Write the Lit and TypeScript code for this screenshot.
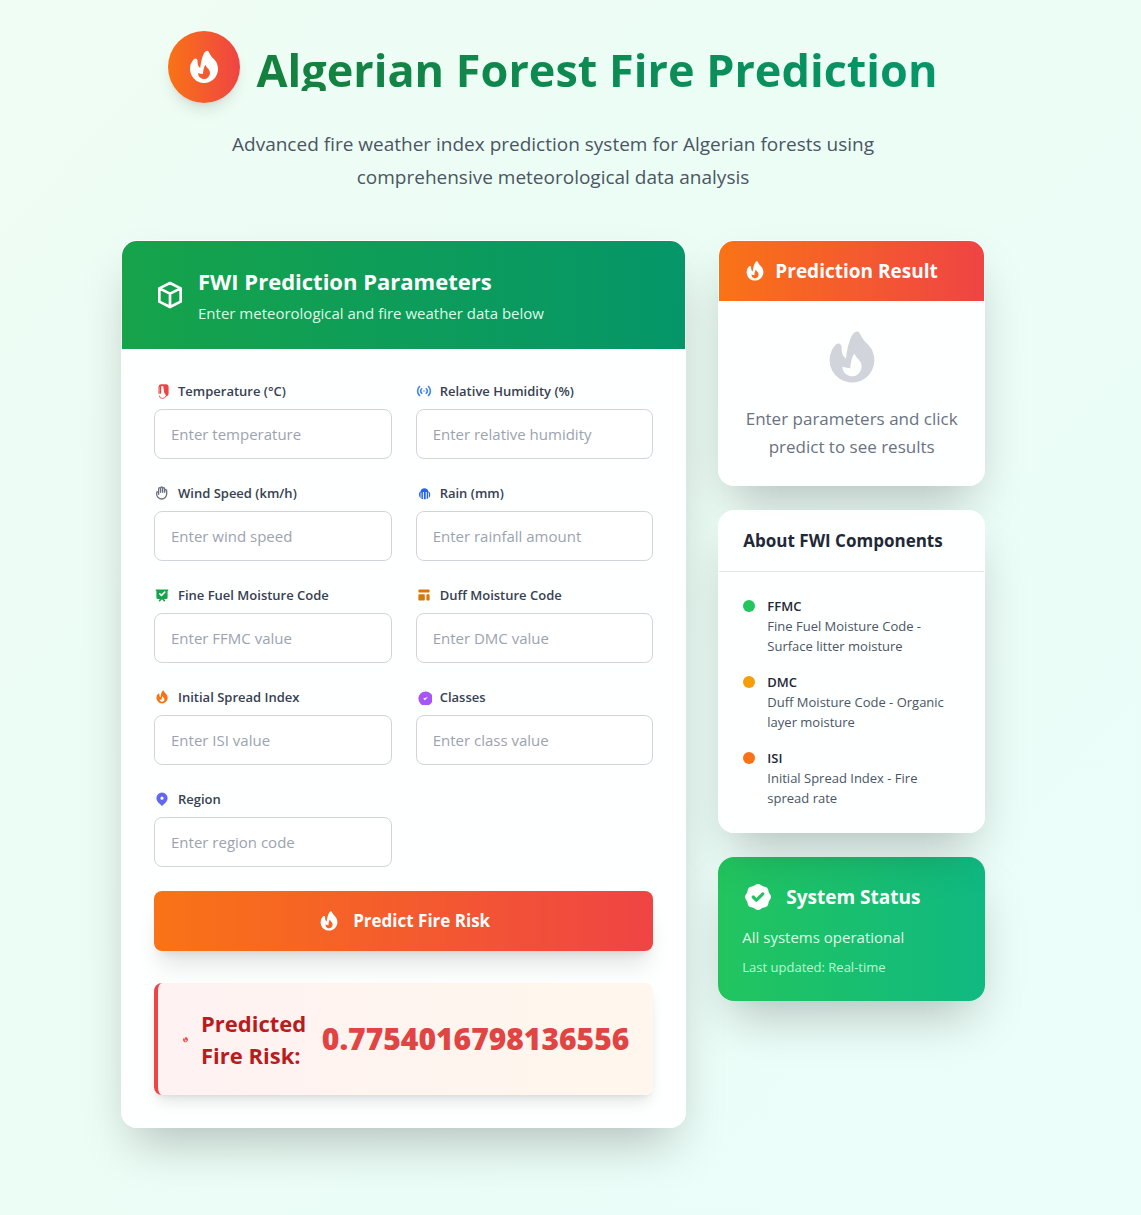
import { LitElement, html, svg, css, nothing } from "lit";
import { customElement, property } from "lit/decorators.js";

const FLAME = svg`<path fill-rule="evenodd" clip-rule="evenodd" d="M12.395 2.553a1 1 0 00-1.45-.385c-.345.23-.614.558-.822.88-.214.33-.403.713-.57 1.116-.334.804-.614 1.768-.84 2.734a31.365 31.365 0 00-.613 3.58 2.64 2.64 0 01-.945-1.067c-.328-.68-.398-1.534-.398-2.654A1 1 0 005.05 6.05 6.981 6.981 0 003 11a7 7 0 1011.95-4.95c-.592-.591-.98-.985-1.348-1.467-.363-.476-.724-1.063-1.207-2.03zM12.12 15.12A3 3 0 017 13s.879.5 2.5.5c0-1 .5-4 1.25-4.5.5 1 .786 1.293 1.371 1.879A2.99 2.99 0 0113 13a2.99 2.99 0 01-.879 2.121z"/>`;

const ICONS: Record<string, { box: number; stroke?: boolean; body: unknown }> = {
  fire: { box: 20, body: FLAME },
  cube: {
    box: 24,
    stroke: true,
    body: svg`<path d="M20 7l-8-4-8 4m16 0l-8 4m8-4v10l-8 4m0-10L4 7m8 4v10M4 7v10l8 4"/>`,
  },
  badge: {
    box: 20,
    body: svg`<path fill-rule="evenodd" d="M6.267 3.455a3.066 3.066 0 001.745-.723 3.066 3.066 0 013.976 0 3.066 3.066 0 001.745.723 3.066 3.066 0 012.812 2.812c.051.643.304 1.254.723 1.745a3.066 3.066 0 010 3.976 3.066 3.066 0 00-.723 1.745 3.066 3.066 0 01-2.812 2.812 3.066 3.066 0 00-1.745.723 3.066 3.066 0 01-3.976 0 3.066 3.066 0 00-1.745-.723 3.066 3.066 0 01-2.812-2.812 3.066 3.066 0 00-.723-1.745 3.066 3.066 0 010-3.976 3.066 3.066 0 00.723-1.745 3.066 3.066 0 012.812-2.812zm7.44 5.252a1 1 0 00-1.414-1.414L9 10.586 7.707 9.293a1 1 0 00-1.414 1.414l2 2a1 1 0 001.414 0l4-4z"/>`,
  },
  thermometer: {
    box: 16,
    body: svg`<path fill-rule="evenodd" d="M7 1.300h5a2.600 2.600 0 012.600 2.600v6.600a3 3 0 01-2.400 2.900C12 11.600 10.600 10.700 10.200 9.500L9.300 3.600a.8.8 0 00-.8-.6H8a.8.8 0 00-.8.800V10L6.300 11 5.800 10.500V4.200L5.500 4v7h-1V3.900A2.600 2.600 0 017 1.300z"/><path fill="none" stroke="currentColor" stroke-width=".9" d="M5.200 12.600A3.400 3.400 0 008.500 15.500a3.400 3.400 0 003.300-2.600"/>`,
  },
  signal: {
    box: 20,
    body: svg`<path fill-rule="evenodd" d="M5.05 3.636a1 1 0 010 1.414 7 7 0 000 9.9 1 1 0 11-1.414 1.414 9 9 0 010-12.728 1 1 0 011.414 0zm9.9 0a1 1 0 011.414 0 9 9 0 010 12.728 1 1 0 11-1.414-1.414 7 7 0 000-9.9 1 1 0 010-1.414zM7.879 6.464a1 1 0 010 1.414 3 3 0 000 4.243 1 1 0 11-1.415 1.414 5 5 0 010-7.07 1 1 0 011.415 0zm4.242 0a1 1 0 011.415 0 5 5 0 010 7.072 1 1 0 01-1.415-1.415 3 3 0 000-4.242 1 1 0 010-1.415zM10 9a1 1 0 011 1v.01a1 1 0 11-2 0V10a1 1 0 011-1z"/>`,
  },
  hand: {
    box: 24,
    stroke: true,
    body: svg`<path d="M7 11.5V14m0-2.5v-6a1.5 1.5 0 113 0m-3 6a1.5 1.5 0 00-3 0v2a7.5 7.5 0 0015 0v-5a1.5 1.5 0 00-3 0m-6-3V11m0-5.5v-1a1.5 1.5 0 013 0v1m0 0V11m0-5.5a1.5 1.5 0 013 0v3m0 0V11"/>`,
  },
  rain: {
    box: 16,
    body: svg`<path fill-rule="evenodd" d="M3 9.200C3 7.700 3.700 6.900 4.500 6.400 5 4.400 6.500 3.200 8.400 3.200s3.500 1.200 4 3.200c1.200.4 1.800 1.500 1.800 3 0 1.700-.5 2.900-1.400 3.600V7.500h-.8v6.200h-1.300V7h-1v7.300H7.900V7h-1v7.200l-1.500-.4V7.500h-.8v5.700C3.600 12.400 3 10.900 3 9.200z"/>`,
  },
  board: {
    box: 20,
    body: svg`<path fill-rule="evenodd" d="M3 3a1 1 0 000 2v8a2 2 0 002 2h2.586l-1.293 1.293a1 1 0 101.414 1.414L10 15.414l2.293 2.293a1 1 0 001.414-1.414L12.414 15H15a2 2 0 002-2V5a1 1 0 100-2H3zm11.200 4.100a1 1 0 00-1.414-1.414L9.300 9.200 7.900 7.800a1 1 0 00-1.414 1.414l2.100 2.100a1 1 0 001.414 0l4.200-4.200z"/>`,
  },
  template: {
    box: 20,
    body: svg`<path d="M3 4a1 1 0 011-1h12a1 1 0 011 1v2a1 1 0 01-1 1H4a1 1 0 01-1-1V4zM3 10a1 1 0 011-1h6a1 1 0 011 1v6a1 1 0 01-1 1H4a1 1 0 01-1-1v-6zM14 9a1 1 0 00-1 1v6a1 1 0 001 1h2a1 1 0 001-1v-6a1 1 0 00-1-1h-2z"/>`,
  },
  check: {
    box: 20,
    body: svg`<path fill-rule="evenodd" d="M9 12l2 2 4-4m6 2a9 9 0 11-18 0 9 9 0 0118 0z"/>`,
  },
  pin: {
    box: 20,
    body: svg`<path fill-rule="evenodd" d="M5.05 4.05a7 7 0 119.9 9.9L10 18.9l-4.95-4.95a7 7 0 010-9.9zM10 11a2 2 0 100-4 2 2 0 000 4z"/>`,
  },
};

@customElement("fwi-icon")
export class FwiIcon extends LitElement {
  @property() name = "fire";

  static styles = css`
    :host {
      display: block;
      flex: none;
      width: 16px;
      height: 16px;
    }
    .glyph {
      display: block;
      width: 100%;
      height: 100%;
      overflow: hidden;
      fill: currentColor;
    }
    .line {
      fill: none;
      stroke: currentColor;
      stroke-width: 2;
      stroke-linecap: round;
      stroke-linejoin: round;
    }
  `;

  render() {
    const icon = ICONS[this.name];
    if (!icon) return nothing;
    return html`<svg
      class=${icon.stroke ? "glyph line" : "glyph"}
      viewBox="0 0 ${icon.box} ${icon.box}"
      aria-hidden="true"
    >${icon.body}</svg>`;
  }
}

const FIELDS = [
  { id: "temperature", label: "Temperature (°C)", hint: "Enter temperature", icon: "thermometer", tone: "red" },
  { id: "humidity", label: "Relative Humidity (%)", hint: "Enter relative humidity", icon: "signal", tone: "blue" },
  { id: "wind", label: "Wind Speed (km/h)", hint: "Enter wind speed", icon: "hand", tone: "gray" },
  { id: "rain", label: "Rain (mm)", hint: "Enter rainfall amount", icon: "rain", tone: "navy" },
  { id: "ffmc", label: "Fine Fuel Moisture Code", hint: "Enter FFMC value", icon: "board", tone: "green" },
  { id: "dmc", label: "Duff Moisture Code", hint: "Enter DMC value", icon: "template", tone: "amber" },
  { id: "isi", label: "Initial Spread Index", hint: "Enter ISI value", icon: "fire", tone: "orange" },
  { id: "classes", label: "Classes", hint: "Enter class value", icon: "check", tone: "purple" },
  { id: "region", label: "Region", hint: "Enter region code", icon: "pin", tone: "indigo" },
];

const COMPONENTS = [
  { code: "FFMC", text: "Fine Fuel Moisture Code - Surface litter moisture", dot: "dot-green" },
  { code: "DMC", text: "Duff Moisture Code - Organic layer moisture", dot: "dot-amber" },
  { code: "ISI", text: "Initial Spread Index - Fire spread rate", dot: "dot-orange" },
];

@customElement("app-root")
export class AppRoot extends LitElement {
  static styles = css`
    :host {
      display: block;
      font-family: "Segoe UI", "Open Sans", "Noto Sans", sans-serif;
      color: #1f2937;
    }
    *,
    *::before,
    *::after {
      box-sizing: border-box;
    }
    h1, h2, h3, p, dl, dt, dd {
      margin: 0;
    }
    .page {
      min-height: 100vh;
      padding: 31px 51px 48px 16px;
      background: linear-gradient(to bottom right, #f0fdf4, #ecfdf5 30%, #ecfefa);
    }
    .container {
      max-width: 864px;
      margin: 0 auto;
    }
    .hero {
      display: flex;
      flex-direction: column;
      align-items: center;
      gap: 25px;
      margin-bottom: 46px;
      text-align: center;
    }
    .brand {
      display: flex;
      align-items: center;
      gap: 16px;
    }
    .brand-mark {
      padding: 16px;
      border-radius: 50%;
      color: #fff;
      background: linear-gradient(to right, #f97316, #ef4444);
      box-shadow: 0 10px 15px -3px rgba(0, 0, 0, 0.1), 0 4px 6px -4px rgba(0, 0, 0, 0.1);
    }
    .brand-mark fwi-icon {
      width: 40px;
      height: 40px;
    }
    .title {
      padding-top: 6px;
      font-size: 45px;
      line-height: 42px;
      font-weight: 700;
      color: transparent;
      background: linear-gradient(to right, #15803d, #059669);
      -webkit-background-clip: text;
      background-clip: text;
    }
    .lead {
      max-width: 672px;
      font-size: 19px;
      line-height: 33px;
      color: #4b5563;
    }
    .layout {
      display: grid;
      grid-template-columns: repeat(3, minmax(0, 1fr));
      align-items: start;
      gap: 32px;
    }
    .card {
      position: relative;
      border: 1px solid rgba(255, 255, 255, 0.2);
      border-radius: 16px;
      background: rgba(255, 255, 255, 0.95);
      box-shadow: 0 25px 50px -12px rgba(0, 0, 0, 0.25);
    }
    .main {
      grid-column: span 2;
    }
    .side {
      display: flex;
      flex-direction: column;
      gap: 24px;
    }
    .main-head {
      display: flex;
      align-items: center;
      gap: 12px;
      padding: 24px 32px;
      border-radius: 15px 15px 0 0;
      color: #fff;
      background: linear-gradient(to right, #16a34a, #059669);
    }
    .main-head fwi-icon,
    .status-head fwi-icon {
      width: 32px;
      height: 32px;
    }
    .main-title {
      font-size: 22px;
      line-height: 32px;
      font-weight: 700;
    }
    .main-sub {
      margin-top: 4px;
      font-size: 15px;
      line-height: 24px;
      color: #dcfce7;
    }
    .main-body {
      padding: 32px;
    }
    .fields {
      display: grid;
      grid-template-columns: repeat(2, minmax(0, 1fr));
      gap: 24px;
    }
    .field-label {
      display: flex;
      align-items: center;
      gap: 8px;
      margin-bottom: 8px;
      font-size: 13px;
      line-height: 20px;
      font-weight: 600;
      color: #374151;
    }
    .field-input {
      display: block;
      width: 100%;
      height: 50px;
      padding: 12px 16px;
      border: 1px solid #d1d5db;
      border-radius: 8px;
      background: #fff;
      font-family: inherit;
      font-size: 15px;
      line-height: 24px;
      color: #1f2937;
    }
    .field-input::placeholder {
      color: #9ca3af;
      opacity: 1;
    }
    .red { color: #ef4444; }
    .blue { color: #3b82f6; }
    .gray { color: #6b7280; }
    .navy { color: #2563eb; }
    .green { color: #16a34a; }
    .amber { color: #d97706; }
    .orange { color: #f97316; }
    .purple { color: #a855f7; }
    .indigo { color: #6366f1; }
    .submit {
      display: flex;
      align-items: center;
      justify-content: center;
      gap: 12px;
      width: 100%;
      margin-top: 24px;
      padding: 16px 24px;
      border: 0;
      border-radius: 8px;
      font-family: inherit;
      font-size: 17px;
      line-height: 28px;
      font-weight: 700;
      color: #fff;
      background: linear-gradient(to right, #f97316, #ef4444);
      box-shadow: 0 20px 25px -5px rgba(0, 0, 0, 0.1), 0 8px 10px -6px rgba(0, 0, 0, 0.1);
      cursor: pointer;
    }
    .submit fwi-icon,
    .result-head fwi-icon {
      width: 24px;
      height: 24px;
    }
    .outcome {
      display: flex;
      align-items: center;
      gap: 12px;
      margin-top: 32px;
      padding: 24px;
      border-left: 4px solid #ef4444;
      border-radius: 8px;
      background: linear-gradient(to right, #fef2f2, #fff7ed);
      box-shadow: 0 10px 15px -3px rgba(0, 0, 0, 0.1), 0 4px 6px -4px rgba(0, 0, 0, 0.1);
    }
    .outcome fwi-icon {
      width: 7px;
      height: 7px;
      color: #ef4444;
    }
    .outcome-label {
      flex: 1;
      font-size: 22px;
      line-height: 32px;
      font-weight: 700;
      color: #b91c1c;
    }
    .outcome-value {
      font-size: 30px;
      line-height: 36px;
      font-weight: 800;
      color: #e24343;
    }
    .result-head {
      display: flex;
      align-items: center;
      gap: 8px;
      padding: 16px 24px;
      border-radius: 15px 15px 0 0;
      color: #fff;
      background: linear-gradient(to right, #f97316, #ef4444);
    }
    .side-title {
      font-size: 19px;
      line-height: 28px;
      font-weight: 700;
    }
    .result-body {
      display: flex;
      flex-direction: column;
      align-items: center;
      gap: 16px;
      padding: 24px;
      text-align: center;
      font-size: 17px;
      line-height: 28px;
      color: #6b7280;
    }
    .result-body fwi-icon {
      width: 64px;
      height: 64px;
      color: #d1d5db;
    }
    .about-title {
      padding: 16px 24px;
      border-bottom: 1px solid #e5e7eb;
      font-size: 17px;
      line-height: 28px;
      font-weight: 700;
    }
    .about-list {
      display: flex;
      flex-direction: column;
      gap: 16px;
      padding: 24px;
      font-size: 13px;
      line-height: 20px;
    }
    .about-item {
      display: flex;
      gap: 12px;
    }
    .dot {
      flex: none;
      width: 12px;
      height: 12px;
      margin-top: 4px;
      border-radius: 50%;
    }
    .dot-green { background: #22c55e; }
    .dot-amber { background: #f59e0b; }
    .dot-orange { background: #f97316; }
    .about-code {
      font-weight: 600;
    }
    .about-text {
      color: #4b5563;
    }
    .status {
      padding: 24px;
      border-radius: 16px;
      color: #fff;
      background: linear-gradient(to right, #22c55e, #10b981);
      box-shadow: 0 25px 50px -12px rgba(0, 0, 0, 0.25);
    }
    .status-head {
      display: flex;
      align-items: center;
      gap: 12px;
      margin-bottom: 12px;
    }
    .status-text {
      font-size: 15px;
      line-height: 24px;
      color: #dcfce7;
    }
    .status-time {
      margin-top: 8px;
      font-size: 13px;
      line-height: 20px;
      color: #bbf7d0;
    }
    @media (max-width: 800px) {
      .layout,
      .fields {
        grid-template-columns: minmax(0, 1fr);
      }
      .main {
        grid-column: auto;
      }
      .page {
        padding-right: 16px;
      }
    }
  `;

  render() {
    return html`
      <div class="page">
        <div class="container">
          <header class="hero">
            <div class="brand">
              <div class="brand-mark"><fwi-icon name="fire"></fwi-icon></div>
              <h1 class="title">Algerian Forest Fire Prediction</h1>
            </div>
            <p class="lead">
              Advanced fire weather index prediction system for Algerian forests using
              comprehensive meteorological data analysis
            </p>
          </header>
          <main class="layout">
            <section class="card main">
              <div class="main-head">
                <fwi-icon name="cube"></fwi-icon>
                <div>
                  <h2 class="main-title">FWI Prediction Parameters</h2>
                  <p class="main-sub">Enter meteorological and fire weather data below</p>
                </div>
              </div>
              <form class="main-body" @submit=${(e: Event) => e.preventDefault()}>
                <div class="fields">
                  ${FIELDS.map(
                    (f) => html`<div>
                      <label class="field-label" for=${f.id}>
                        <fwi-icon class=${f.tone} name=${f.icon}></fwi-icon>${f.label}
                      </label>
                      <input class="field-input" id=${f.id} name=${f.id} type="text" inputmode="decimal" placeholder=${f.hint} />
                    </div>`
                  )}
                </div>
                <button class="submit" type="submit">
                  <fwi-icon name="fire"></fwi-icon>Predict Fire Risk
                </button>
                <div class="outcome">
                  <fwi-icon name="fire"></fwi-icon>
                  <h3 class="outcome-label">Predicted Fire Risk:</h3>
                  <output class="outcome-value">0.7754016798136556</output>
                </div>
              </form>
            </section>
            <aside class="side">
              <section class="card">
                <div class="result-head">
                  <fwi-icon name="fire"></fwi-icon>
                  <h3 class="side-title">Prediction Result</h3>
                </div>
                <div class="result-body">
                  <fwi-icon name="fire"></fwi-icon>
                  <p>Enter parameters and click predict to see results</p>
                </div>
              </section>
              <section class="card">
                <h3 class="about-title">About FWI Components</h3>
                <dl class="about-list">
                  ${COMPONENTS.map(
                    (c) => html`<div class="about-item">
                      <span class="dot ${c.dot}"></span>
                      <div>
                        <dt class="about-code">${c.code}</dt>
                        <dd class="about-text">${c.text}</dd>
                      </div>
                    </div>`
                  )}
                </dl>
              </section>
              <section class="status">
                <div class="status-head">
                  <fwi-icon name="badge"></fwi-icon>
                  <h3 class="side-title">System Status</h3>
                </div>
                <p class="status-text">All systems operational</p>
                <p class="status-time">Last updated: Real-time</p>
              </section>
            </aside>
          </main>
        </div>
      </div>
    `;
  }
}
